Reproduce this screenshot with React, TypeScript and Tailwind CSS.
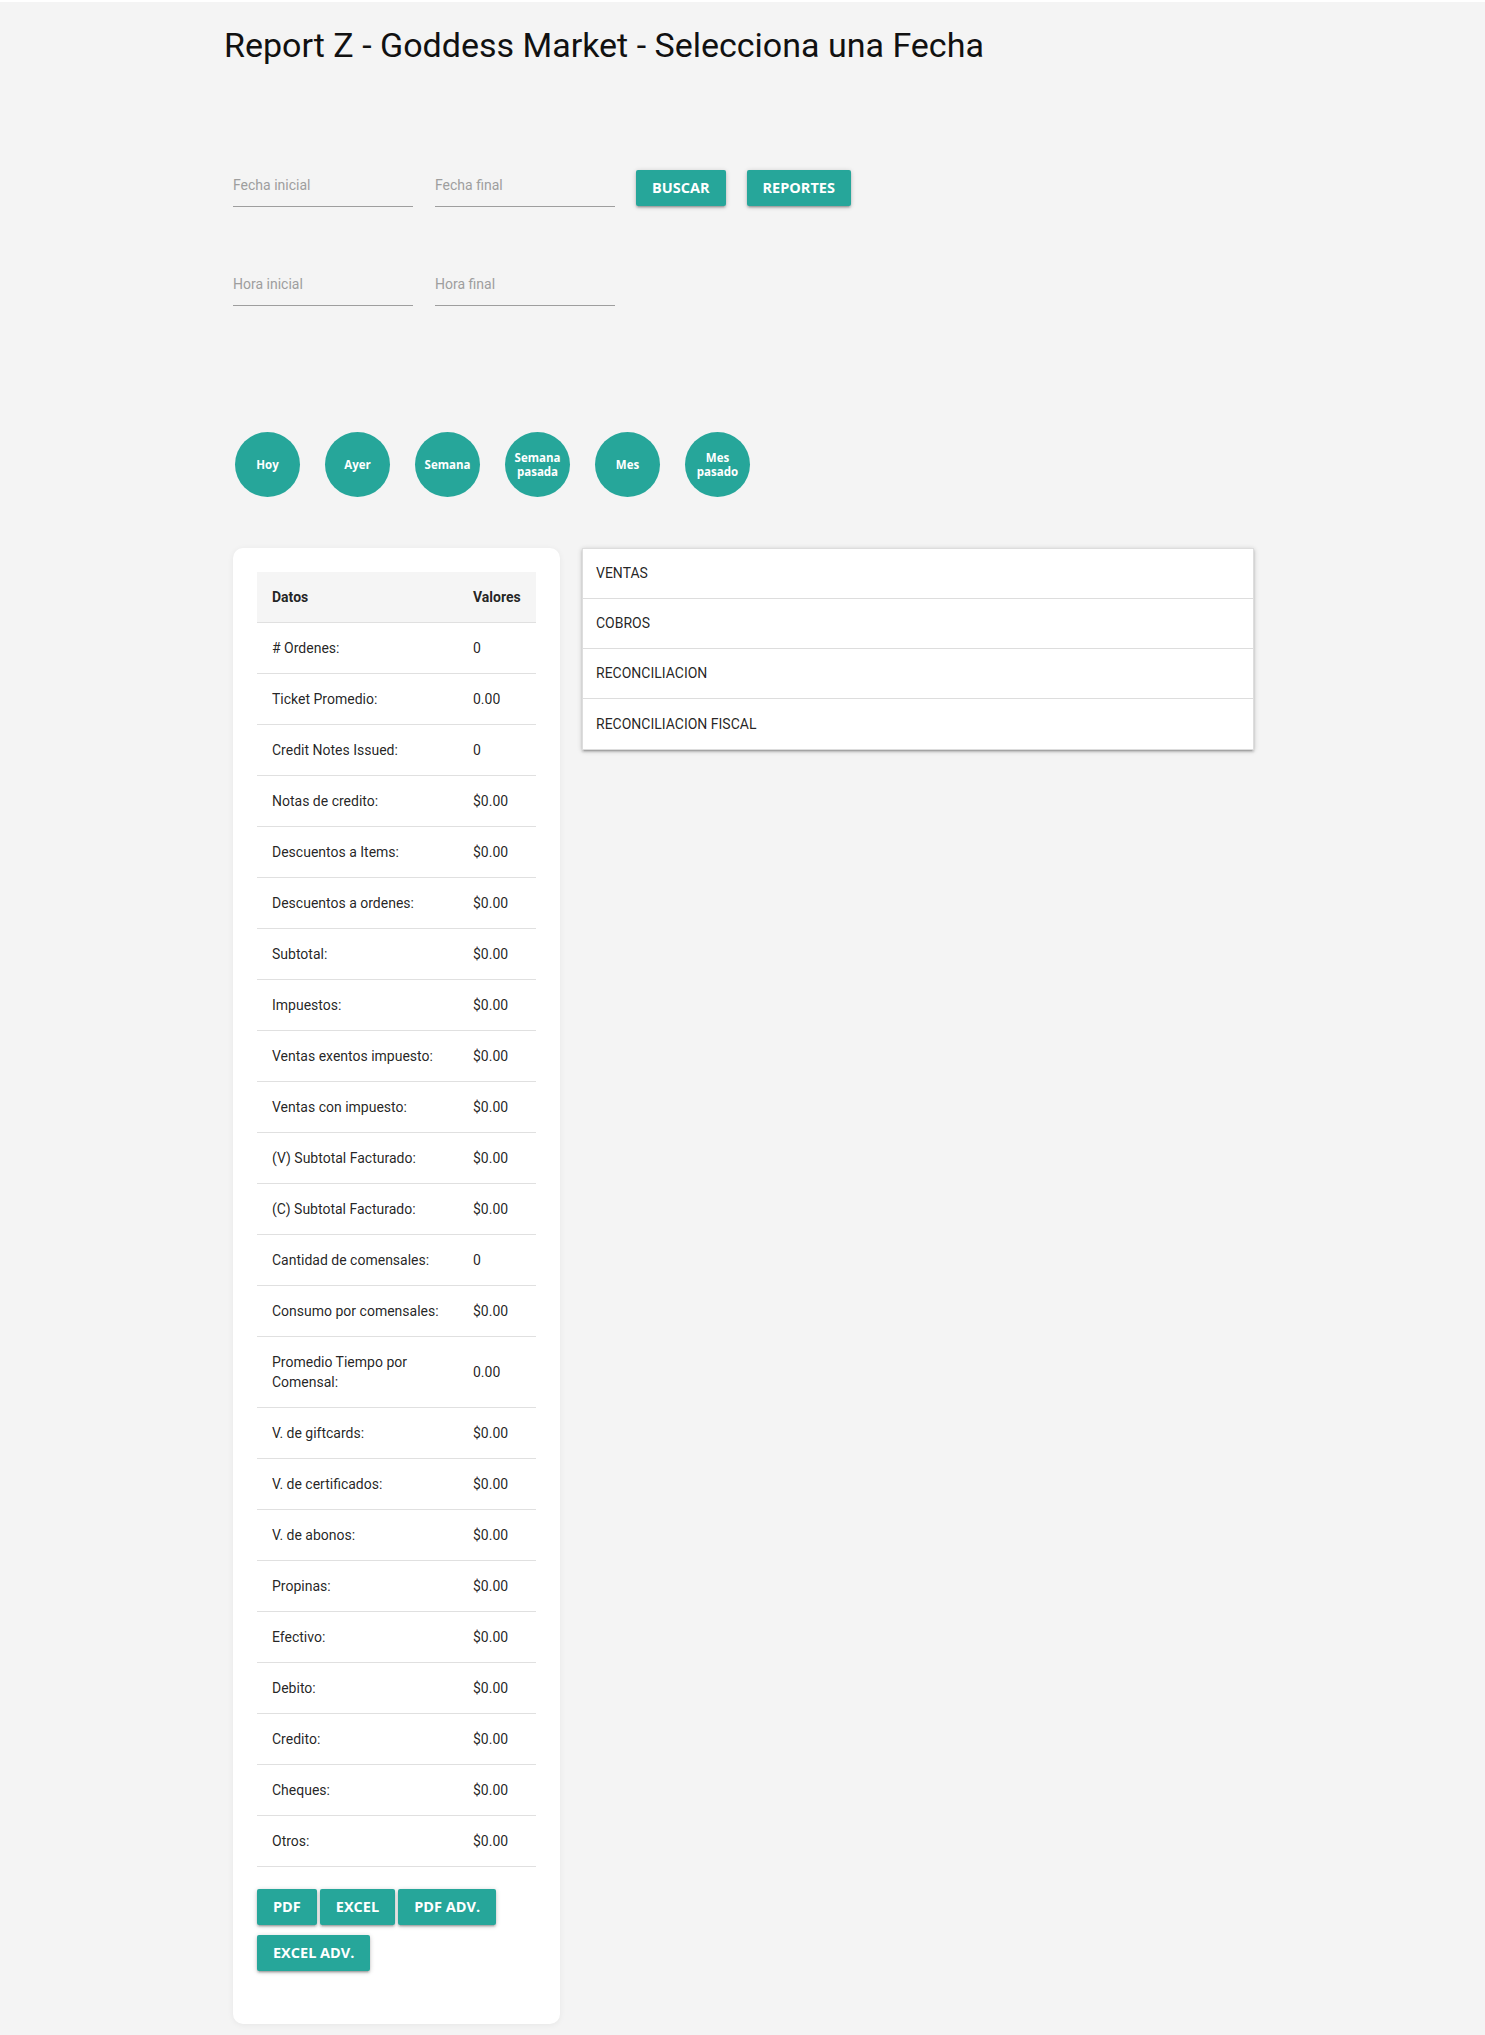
import React from "react";

const rows: [string, string][] = [
  ["# Ordenes:", "0"],
  ["Ticket Promedio:", "0.00"],
  ["Credit Notes Issued:", "0"],
  ["Notas de credito:", "$0.00"],
  ["Descuentos a Items:", "$0.00"],
  ["Descuentos a ordenes:", "$0.00"],
  ["Subtotal:", "$0.00"],
  ["Impuestos:", "$0.00"],
  ["Ventas exentos impuesto:", "$0.00"],
  ["Ventas con impuesto:", "$0.00"],
  ["(V) Subtotal Facturado:", "$0.00"],
  ["(C) Subtotal Facturado:", "$0.00"],
  ["Cantidad de comensales:", "0"],
  ["Consumo por comensales:", "$0.00"],
  ["Promedio Tiempo por Comensal:", "0.00"],
  ["V. de giftcards:", "$0.00"],
  ["V. de certificados:", "$0.00"],
  ["V. de abonos:", "$0.00"],
  ["Propinas:", "$0.00"],
  ["Efectivo:", "$0.00"],
  ["Debito:", "$0.00"],
  ["Credito:", "$0.00"],
  ["Cheques:", "$0.00"],
  ["Otros:", "$0.00"],
];

const shadow =
  "shadow-[0_2px_2px_0_rgba(0,0,0,0.14),0_3px_1px_-2px_rgba(0,0,0,0.12),0_1px_5px_0_rgba(0,0,0,0.2)]";

function Field({ label }: { label: string }) {
  return (
    <div className="h-[37px] w-[180px] border-b border-[#9e9e9e] pt-[5px]">
      <span className="block text-[14px] leading-5 text-[#9e9e9e]">{label}</span>
    </div>
  );
}

function Btn({ children }: { children: React.ReactNode }) {
  return (
    <button
      className={`h-[36px] rounded-[2px] bg-[#26a69a] px-4 font-['Open_Sans',sans-serif] text-[14.5px] font-bold text-white ${shadow}`}
    >
      {children}
    </button>
  );
}

function Circle({ children }: { children: React.ReactNode }) {
  return (
    <div className="flex h-[65px] w-[65px] items-center justify-center rounded-full bg-[#26a69a] text-center font-['Open_Sans',sans-serif] text-[11.5px] font-bold leading-[14px] text-white">
      <span>{children}</span>
    </div>
  );
}

export default function App() {
  return (
    <div className="min-h-screen bg-[#f4f4f4] font-['Roboto',sans-serif] text-[rgba(0,0,0,0.87)]">
      <div className="h-[2px] bg-white" />
      <div className="pl-[224px]">
        <h1 className="pt-[25px] text-[34px] font-normal leading-[37px] text-[#111]">
          Report Z - Goddess Market - Selecciona una Fecha
        </h1>
      </div>
      <div className="pl-[233px] pt-[106px]">
        <div className="flex items-start">
          <Field label="Fecha inicial" />
          <div className="ml-[22px]">
            <Field label="Fecha final" />
          </div>
          <div className="ml-[21px]">
            <Btn>BUSCAR</Btn>
          </div>
          <div className="ml-[21px]">
            <Btn>REPORTES</Btn>
          </div>
        </div>
        <div className="mt-[62px] flex items-start">
          <Field label="Hora inicial" />
          <div className="ml-[22px]">
            <Field label="Hora final" />
          </div>
        </div>
        <div className="mt-[126px] flex gap-[25px] pl-[2px]">
          <Circle>Hoy</Circle>
          <Circle>Ayer</Circle>
          <Circle>Semana</Circle>
          <Circle>
            Semana
            <br />
            pasada
          </Circle>
          <Circle>Mes</Circle>
          <Circle>
            Mes
            <br />
            pasado
          </Circle>
        </div>
        <div className="mt-[51px] flex items-start gap-[22px]">
          <div className="w-[327px] rounded-[10px] bg-white p-[24px] pb-[53px] shadow-[0_1px_6px_rgba(0,0,0,0.06)]">
            <table className="w-[279px] table-fixed border-collapse text-[14px] leading-5">
              <colgroup>
                <col className="w-[201px]" />
                <col className="w-[78px]" />
              </colgroup>
              <thead>
                <tr className="bg-[#f5f5f5]">
                  <th className="h-[50px] px-[15px] text-left font-bold">Datos</th>
                  <th className="h-[50px] px-[15px] text-left font-bold">Valores</th>
                </tr>
              </thead>
              <tbody>
                {rows.map(([k, v]) => (
                  <tr key={k} className="border-t border-[#e0e0e0] last:border-b">
                    <td className="px-[15px] py-[15px] align-middle">{k}</td>
                    <td className="px-[15px] py-[15px] align-middle">{v}</td>
                  </tr>
                ))}
              </tbody>
            </table>
            <div className="mt-[22px] flex flex-wrap gap-x-[3px] gap-y-[10px]">
              <Btn>PDF</Btn>
              <Btn>EXCEL</Btn>
              <Btn>PDF ADV.</Btn>
              <Btn>EXCEL ADV.</Btn>
            </div>
          </div>
          <div className={`w-[672px] border border-[#ddd] bg-white ${shadow}`}>
            {["VENTAS", "COBROS", "RECONCILIACION", "RECONCILIACION FISCAL"].map((t, i) => (
              <div
                key={t}
                className={`flex h-[50px] items-center px-[13px] text-[14px] ${i < 3 ? "border-b border-[#ddd]" : ""}`}
              >
                {t}
              </div>
            ))}
          </div>
        </div>
      </div>
    </div>
  );
}
